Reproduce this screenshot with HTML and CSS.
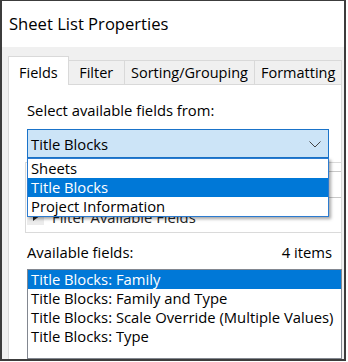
FILE: index.html
```html
<!DOCTYPE html>
<html>

<head>
    <link rel="stylesheet" href="styles.css">
</head>

<body>
    <div class="window">
        <div class="titlebar">Sheet List Properties</div>
        <div class="dialog">
            <div class="tabs">
                <div class="tab tab-fields active">Fields</div>
                <div class="tab tab-filter">Filter</div>
                <div class="tab tab-sorting">Sorting/Grouping</div>
                <div class="tab tab-format">Formatting</div>
            </div>
            <div class="panel">
                <div class="label">Select available fields from:</div>
                <div class="comboWrap">
                    <div class="combo">
                        <span>Title Blocks</span>
                        <svg class="chevron" width="12" height="7" viewBox="0 0 12 7">
                            <polyline points="0.5,0.5 6,6 11.5,0.5" fill="none" stroke="#444" stroke-width="1"/>
                        </svg>
                    </div>
                    <ul class="dropdown">
                        <li>Sheets</li>
                        <li class="selected">Title Blocks</li>
                        <li>Project Information</li>
                    </ul>
                </div>
                <div class="filterBox">
                    <div class="search"></div>
                    <div class="expander">
                        <span class="arrowBtn">
                            <svg width="8" height="9" viewBox="0 0 8 9"><polygon points="1,0 7,4.5 1,9" fill="#222"/></svg>
                        </span>
                        Filter Available Fields
                    </div>
                </div>
                <div class="listHead">
                    <span>Available fields:</span>
                    <span>4 items</span>
                </div>
                <ul class="listbox">
                    <li class="selected">Title Blocks: Family</li>
                    <li>Title Blocks: Family and Type</li>
                    <li>Title Blocks: Scale Override (Multiple Values)</li>
                    <li>Title Blocks: Type</li>
                </ul>
            </div>
        </div>
    </div>
</body>

</html>
```

FILE: styles.css
```css
body {
    margin: 0;
    background: #fff;
    font-family: "Open Sans", "Noto Sans", sans-serif;
    color: #000;
}

.window {
    width: 342px;
    height: 358px;
    border-top: 1px solid #3c3c3c;
    border-left: 2px solid #3c3c3c;
    border-right: 2px solid #3c3c3c;
    border-bottom: 2px solid #3c3c3c;
    display: flex;
    flex-direction: column;
    overflow: hidden;
}

.titlebar {
    height: 46px;
    line-height: 46px;
    padding-left: 7px;
    font-size: 16.6px;
    background: #fff;
}

.dialog {
    flex: 1;
    background: #f0f0f0;
    padding: 10px 2px 0 6px;
    display: flex;
    flex-direction: column;
}

.tabs {
    display: flex;
    align-items: flex-end;
    height: 27px;
    font-size: 14.5px;
}

.tab {
    height: 23px;
    line-height: 23px;
    border: 1px solid #d9d9d9;
    border-bottom: none;
    margin-left: -1px;
    text-align: center;
    background: #f0f0f0;
}

.tab.active {
    height: 28px;
    line-height: 32px;
    margin-left: 0;
    margin-bottom: -1px;
    background: #fff;
    position: relative;
    z-index: 1;
}

.tab-fields { width: 59px; }
.tab-filter { width: 55px; }
.tab-sorting { width: 130px; }
.tab-format { width: 86px; }

.panel {
    flex: 1;
    background: #fff;
    border: 1px solid #d9d9d9;
    border-bottom: none;
    padding-left: 18px;
    font-size: 14.8px;
    display: flex;
    flex-direction: column;
}

.label {
    margin-top: 15px;
    line-height: 20px;
}

.comboWrap {
    position: relative;
    margin-top: 9px;
    width: 302px;
    z-index: 2;
}

.combo {
    height: 27px;
    border: 1px solid #1a73c9;
    background: #cce4f7;
    display: flex;
    align-items: center;
    justify-content: space-between;
    padding: 0 7px 0 3px;
}

.chevron {
    margin-top: 1px;
}

.dropdown {
    position: absolute;
    top: 29px;
    left: 0;
    width: 300px;
    margin: 0;
    padding: 0;
    list-style: none;
    background: #fff;
    border: 1px solid #2b7bd0;
    box-shadow: 2px 2px 3px rgba(0, 0, 0, 0.35);
}

.dropdown li {
    height: 19px;
    line-height: 19px;
    padding-left: 3px;
}

.dropdown li.selected,
.listbox li.selected {
    background: #0078d7;
    color: #fff;
}

.filterBox {
    margin: 4px 0 0 -2px;
    border: 1px solid #dadada;
    border-right: none;
    padding-top: 8px;
}

.search {
    height: 25px;
    border-top: 1px solid #c8c8c8;
    border-bottom: 1px solid #c8c8c8;
    margin-left: 40px;
}

.expander {
    display: flex;
    align-items: center;
    height: 34px;
    padding-top: 3px;
    box-sizing: border-box;
    color: #222;
}

.arrowBtn {
    width: 17px;
    height: 17px;
    margin: 0 8px 0 1px;
    background: #ececec;
    display: flex;
    align-items: center;
    justify-content: center;
}

.listHead {
    margin-top: 9px;
    line-height: 20px;
    display: flex;
    justify-content: space-between;
    padding-right: 9px;
}

.listbox {
    margin: 7px -1px 0 0;
    padding: 0;
    list-style: none;
    border: 1px solid #828790;
    flex: 1;
}

.listbox li {
    height: 19px;
    line-height: 19px;
    padding-left: 3px;
    white-space: nowrap;
}
```
